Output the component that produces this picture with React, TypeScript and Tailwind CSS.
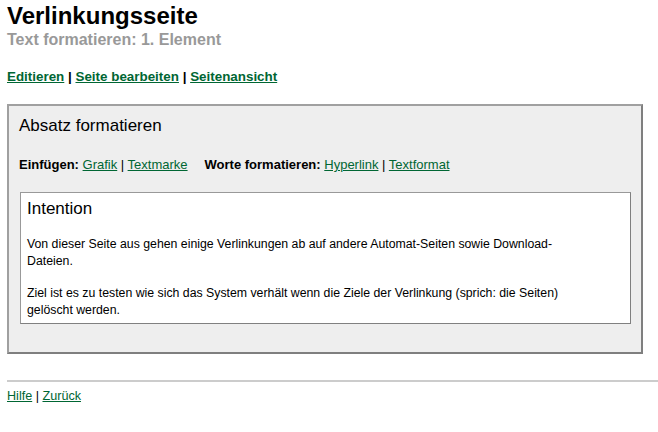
import React from 'react';

const font = { fontFamily: '"Liberation Sans", Arial, sans-serif' };

function Link({ children, bold }: { children: React.ReactNode; bold?: boolean }) {
  return (
    <a href="#" className={`text-[#006633] underline ${bold ? 'font-bold' : ''}`}>
      {children}
    </a>
  );
}

export default function App() {
  return (
    <div className="min-h-[432px] bg-white pl-[7px] text-black" style={font}>
      <h1 className="mt-[3px] text-[24px] font-bold leading-[26px]">Verlinkungsseite</h1>
      <h2 className="mt-[2px] text-[16px] font-bold leading-[18px] text-[#999999]">
        Text formatieren: 1. Element
      </h2>

      <div className="mt-[19px] text-[13.4px] font-bold leading-[17px]">
        <Link bold>Editieren</Link> | <Link bold>Seite bearbeiten</Link> | <Link bold>Seitenansicht</Link>
      </div>

      <div className="mt-[19px] w-[636px] border-2 border-[#a0a0a0] border-r-[#7f7f7f] border-b-[#7f7f7f] bg-[#eeeeee] pt-[10px] pr-[10px] pb-[28px] pl-[10px]">
        <h3 className="text-[17px] leading-[19px]">Absatz formatieren</h3>

        <div className="mt-[22px] flex text-[13px] leading-[16px]">
          <span>
            <b>Einfügen:</b> <Link>Grafik</Link> | <Link>Textmarke</Link>
          </span>
          <span className="ml-[17px]">
            <b>Worte formatieren:</b> <Link>Hyperlink</Link> | <Link>Textformat</Link>
          </span>
        </div>

        <div className="mt-[19px] ml-[1px] border border-[#999999] border-r-[#808080] border-b-[#808080] bg-white pt-[6px] pr-[6px] pb-[4px] pl-[6px]">
          <h4 className="text-[17px] leading-[19px]">Intention</h4>
          <p className="mt-[18px] text-[12.3px] leading-[17px]">
            Von dieser Seite aus gehen einige Verlinkungen ab auf andere Automat-Seiten sowie Download-
            <br />
            Dateien.
          </p>
          <p className="mt-[15px] text-[12.3px] leading-[17px]">
            Ziel ist es zu testen wie sich das System verhält wenn die Ziele der Verlinkung (sprich: die Seiten)
            <br />
            gelöscht werden.
          </p>
        </div>
      </div>

      <div className="mt-[26px] h-[2px] bg-[#cccccc]" />

      <div className="mt-[6px] text-[12.6px] leading-[16px]">
        <Link>Hilfe</Link> | <Link>Zurück</Link>
      </div>
    </div>
  );
}
